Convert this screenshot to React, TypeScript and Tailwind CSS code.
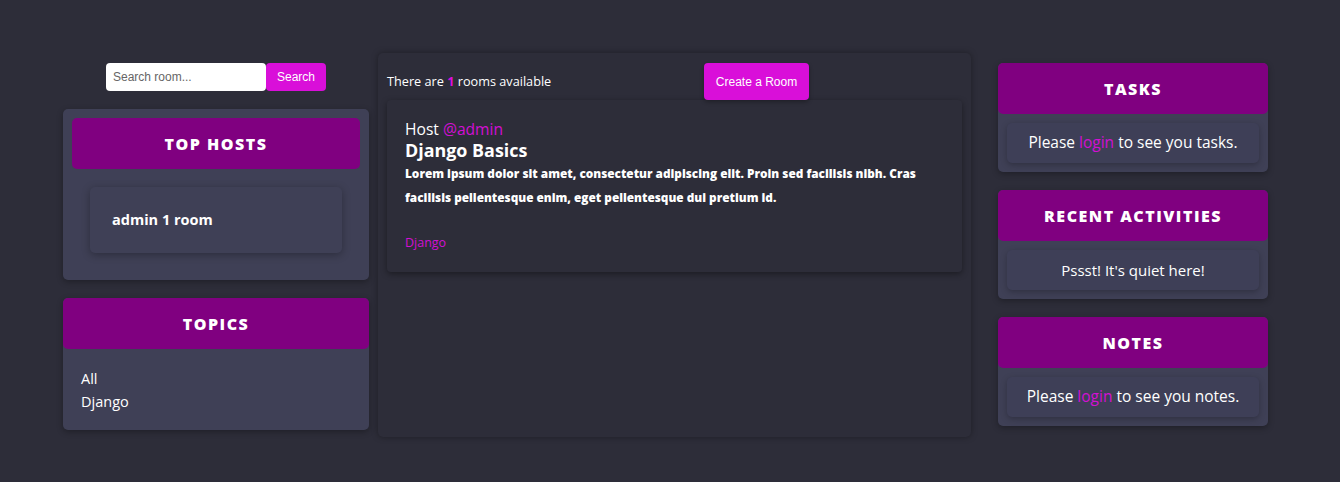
import React from "react";

const font = { fontFamily: '"Open Sans", "Noto Sans", sans-serif' };

const Header = ({ title, inset = false }: { title: string; inset?: boolean }) => (
  <div
    className={`flex h-[51px] items-center justify-center rounded-[5px] bg-[#800080] text-[16px] font-extrabold tracking-[1.5px] text-white ${
      inset ? "mx-[9px] mt-[9px]" : ""
    }`}
  >
    {title}
  </div>
);

const LoginNote = ({ what }: { what: string }) => (
  <div className="mx-[9px] my-[9px] flex h-[40px] items-center justify-center rounded-[5px] bg-[#3e3f57] text-[15.5px] text-white shadow-[0_2px_6px_rgba(0,0,0,0.25)]">
    Please <span className="mx-[4px] text-[#d30fd3]">login</span> to see you {what}.
  </div>
);

export default function App() {
  return (
    <div className="min-h-[482px] w-full bg-[#2d2d39] text-white" style={font}>
      <div className="flex items-start pl-[63px] pt-[53px]">
        {/* left column */}
        <div className="mt-[10px] flex w-[306px] flex-col">
          <form className="flex justify-center" onSubmit={(e) => e.preventDefault()}>
            <input
              placeholder="Search room..."
              className="h-[28px] w-[160px] rounded-[4px] bg-white px-[7px] text-[12px] text-[#222] placeholder:text-[#666] outline-none"
              style={{ fontFamily: '"Liberation Sans", Arial, sans-serif' }}
            />
            <button
              className="h-[28px] w-[60px] rounded-[4px] bg-[#d90fd9] text-[12px] text-white"
              style={{ fontFamily: '"Liberation Sans", Arial, sans-serif' }}
            >
              Search
            </button>
          </form>

          <div className="mt-[18px] h-[171px] rounded-[5px] bg-[#3f4056] shadow-[0_2px_6px_rgba(0,0,0,0.3)]">
            <Header title="TOP HOSTS" inset />
            <div className="mx-[27px] mt-[18px] flex h-[66px] items-center rounded-[5px] bg-[#3f4056] pl-[22px] text-[14.5px] font-bold shadow-[0_2px_8px_rgba(0,0,0,0.3)]">
              admin 1 room
            </div>
          </div>

          <div className="mt-[18px] h-[132px] rounded-[5px] bg-[#3f4056] shadow-[0_2px_6px_rgba(0,0,0,0.3)]">
            <Header title="TOPICS" />
            <div className="flex flex-col pl-[18px] pt-[18px] text-[14.5px] leading-[23px]">
              <span>All</span>
              <span>Django</span>
            </div>
          </div>
        </div>

        {/* center column */}
        <div className="ml-[9px] h-[384px] w-[593px] rounded-[5px] bg-[#2d2d39] px-[9px] pt-[10px] shadow-[0_0_6px_rgba(0,0,0,0.35)]">
          <div className="flex h-[37px] items-center">
            <span className="w-[317px] text-[12.7px]">
              There are <span className="font-bold text-[#d90fd9]">1</span> rooms available
            </span>
            <button
              className="h-[37px] w-[105px] rounded-[4px] bg-[#d90fd9] text-[12px] text-white shadow-[0_2px_4px_rgba(0,0,0,0.3)]"
              style={{ fontFamily: '"Liberation Sans", Arial, sans-serif' }}
            >
              Create a Room
            </button>
          </div>
          <div className="h-[172px] rounded-[4px] bg-[#2d2d39] px-[18px] pt-[18px] shadow-[0_2px_6px_rgba(0,0,0,0.4)]">
            <div className="text-[15.6px] leading-[22px]">
              Host <span className="text-[#d30fd3]">@admin</span>
            </div>
            <div className="text-[17.9px] font-bold leading-[21px]">Django Basics</div>
            <p className="text-[11.8px] font-extrabold leading-[24px]">
              Lorem ipsum dolor sit amet, consectetur adipiscing elit. Proin sed facilisis nibh. Cras
              <br />
              facilisis pellentesque enim, eget pellentesque dui pretium id.
            </p>
            <div className="mt-[25px] text-[12.5px] text-[#d30fd3]">Django</div>
          </div>
        </div>

        {/* right column */}
        <div className="ml-[27px] mt-[10px] flex w-[270px] flex-col gap-[18px]">
          <div className="rounded-[5px] bg-[#3f4056] shadow-[0_2px_6px_rgba(0,0,0,0.3)]">
            <Header title="TASKS" />
            <LoginNote what="tasks" />
          </div>
          <div className="rounded-[5px] bg-[#3f4056] shadow-[0_2px_6px_rgba(0,0,0,0.3)]">
            <Header title="RECENT ACTIVITIES" />
            <div className="mx-[9px] my-[9px] flex h-[40px] items-center justify-center rounded-[5px] bg-[#3e3f57] text-[15px] shadow-[0_2px_6px_rgba(0,0,0,0.25)]">
              Pssst! It's quiet here!
            </div>
          </div>
          <div className="rounded-[5px] bg-[#3f4056] shadow-[0_2px_6px_rgba(0,0,0,0.3)]">
            <Header title="NOTES" />
            <LoginNote what="notes" />
          </div>
        </div>
      </div>
    </div>
  );
}
